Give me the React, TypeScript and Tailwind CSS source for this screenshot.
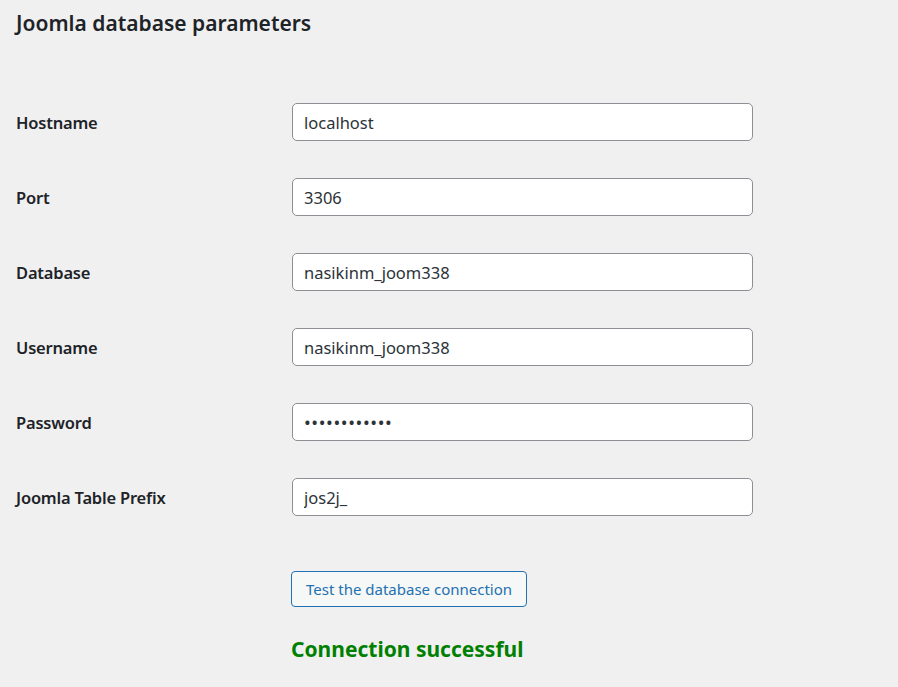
const fields = [
    { label: 'Hostname', value: 'localhost', type: 'text' },
    { label: 'Port', value: '3306', type: 'text' },
    { label: 'Database', value: 'nasikinm_joom338', type: 'text' },
    { label: 'Username', value: 'nasikinm_joom338', type: 'text' },
    { label: 'Password', value: 'secretpass12', type: 'password' },
    { label: 'Joomla Table Prefix', value: 'jos2j_', type: 'text' },
];

export default function App() {
    return (
        <div
            className="min-h-[687px] bg-[#f0f0f1] px-4 text-[#1d2327]"
            style={{ fontFamily: '"Noto Sans", "Open Sans", sans-serif' }}
        >
            <h2 className="pt-[9px] text-[21px] font-semibold leading-[28px] text-[#1d2327]">
                Joomla database parameters
            </h2>

            <div className="mt-[47px] flex flex-col">
                {fields.map((f) => (
                    <div key={f.label} className="flex h-[75px] items-center">
                        <label className="w-[276px] shrink-0 pt-[3px] text-[16.5px] font-semibold tracking-[-0.2px]">
                            {f.label}
                        </label>
                        <input
                            type={f.type}
                            defaultValue={f.value}
                            readOnly
                            className={
                                f.type === 'password'
                                    ? 'h-[38px] w-[461px] rounded-[5px] border border-[#8c8f94] bg-white px-[11px] text-[18px] tracking-[0.6px] text-[#2c3338] outline-none'
                                    : 'h-[38px] w-[461px] rounded-[5px] border border-[#8c8f94] bg-white px-[11px] pt-[1px] text-[16.5px] text-[#2c3338] outline-none'
                            }
                        />
                    </div>
                ))}
            </div>

            <div className="ml-[275px] mt-[37px] flex flex-col items-start">
                <button className="h-[36px] rounded-[4px] border border-[#2271b1] bg-[#f6f7f7] px-[14px] text-[15px] text-[#2271b1]">
                    Test the database connection
                </button>
                <p className="mt-[28px] text-[21px] font-bold leading-[28px] text-[#008000]">
                    Connection successful
                </p>
            </div>
        </div>
    );
}
